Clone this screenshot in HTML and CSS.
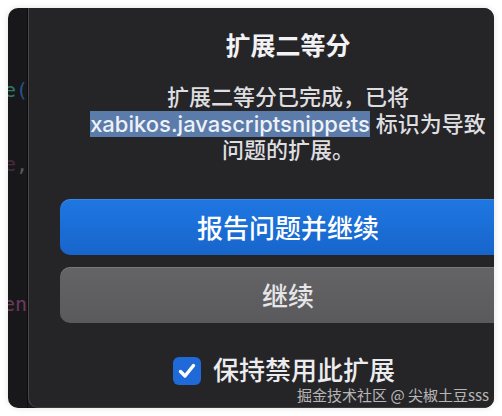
FILE: index.html
```html
<!DOCTYPE html>
<html lang="zh-CN">
<head>
<meta charset="utf-8">
<link rel="stylesheet" href="styles.css">
</head>
<body>
<div class="frame">
  <div class="strip">
    <div class="code l1"><span class="teal">e</span><span class="blue">(</span></div>
    <div class="code l2"><span class="plum">e</span><span class="grey">,</span></div>
    <div class="code l3"><span class="plum2">en</span></div>
  </div>
  <div class="dialog">
    <h1 class="title">扩展二等分</h1>
    <p class="msg">扩展二等分已完成，已将<br><span class="sel">xabikos.javascriptsnippets</span> 标识为导致<br>问题的扩展。</p>
    <div class="buttons">
      <button class="btn primary">报告问题并继续</button>
      <button class="btn secondary">继续</button>
    </div>
    <label class="check">
      <span class="box"><svg viewBox="0 0 28 28" width="28" height="28"><path d="M7.5 14.5 L12 19 L20.5 8.5" fill="none" stroke="#fff" stroke-width="3.4" stroke-linecap="round" stroke-linejoin="round"/></svg></span>
      <span class="label">保持禁用此扩展</span>
    </label>
  </div>
</div>
<div class="watermark">掘金技术社区 @ 尖椒土豆sss</div>
</body>
</html>
```

FILE: styles.css
```css
html, body {
  margin: 0;
  padding: 0;
  background: #ffffff;
}
body {
  width: 502px;
  height: 416px;
  overflow: hidden;
  position: relative;
  font-family: "Inter", "Noto Sans CJK SC", sans-serif;
}
.frame {
  margin: 8px 0 0 8px;
  width: 486px;
  height: 400px;
  border-radius: 10px;
  overflow: hidden;
  display: flex;
  background: #18181b;
  box-shadow: 0 0 6px rgba(0,0,0,0.12);
}
.strip {
  width: 19px;
  flex-shrink: 0;
  border-right: 1px solid #0c0c0e;
  overflow: hidden;
  font-family: "DejaVu Sans Mono", monospace;
  font-size: 20px;
  line-height: 24px;
}
.code {
  white-space: nowrap;
  margin-left: -4px;
}
.l1 { margin-top: 70px; }
.l2 { margin-top: 50px; }
.l3 { margin-top: 116px; margin-left: -5px; }
.teal { color: #2f7a68; }
.blue { color: #24548a; }
.plum { color: #4a2a40; }
.grey { color: #5a5a5e; }
.plum2 { color: #6a3a5e; }
.dialog {
  width: 456px;
  flex-shrink: 0;
  background: #252528;
  border-left: 1px solid #48484b;
  border-bottom: 1px solid #3a3a3d;
  border-bottom-left-radius: 10px;
  padding: 23px 30px 0 31px;
  box-sizing: content-box;
  height: 376px;
  text-align: center;
  color: #e4e4e6;
}
.title {
  margin: 0;
  font-size: 25px;
  line-height: 30px;
  font-weight: 700;
  color: #f2f2f4;
}
.msg {
  margin: 23px 0 0;
  font-size: 22px;
  line-height: 26.5px;
  font-weight: 500;
  color: #dedee0;
}
.sel {
  background: #5b7cab;
  color: #eef2f8;
}
.buttons {
  margin-top: 35px;
  display: flex;
  flex-direction: column;
  gap: 12px;
}
.btn {
  height: 56px;
  border: none;
  border-radius: 10px;
  font-family: "Inter", "Noto Sans CJK SC", sans-serif;
  font-size: 26px;
  font-weight: 500;
  padding: 0;
}
.primary {
  background: linear-gradient(#1f77e2, #1765cb);
  color: #ffffff;
  box-shadow: inset 0 1px 0 rgba(255,255,255,0.12);
}
.secondary {
  background: linear-gradient(#646467, #5a5a5d);
  color: #e6e6e8;
  box-shadow: inset 0 1px 0 rgba(255,255,255,0.14);
}
.check {
  margin-top: 34px;
  display: flex;
  justify-content: center;
  align-items: center;
  gap: 12px;
  margin-right: 8px;
}
.box {
  width: 28px;
  height: 28px;
  border-radius: 6px;
  background: #1f6ad8;
  display: flex;
}
.label {
  font-size: 26px;
  line-height: 28px;
  font-weight: 500;
  color: #ececee;
}
.watermark {
  position: absolute;
  right: 13px;
  top: 386px;
  font-size: 15px;
  line-height: 18px;
  color: rgba(255,255,255,0.68);
  font-family: "Noto Sans CJK SC", sans-serif;
}
```
